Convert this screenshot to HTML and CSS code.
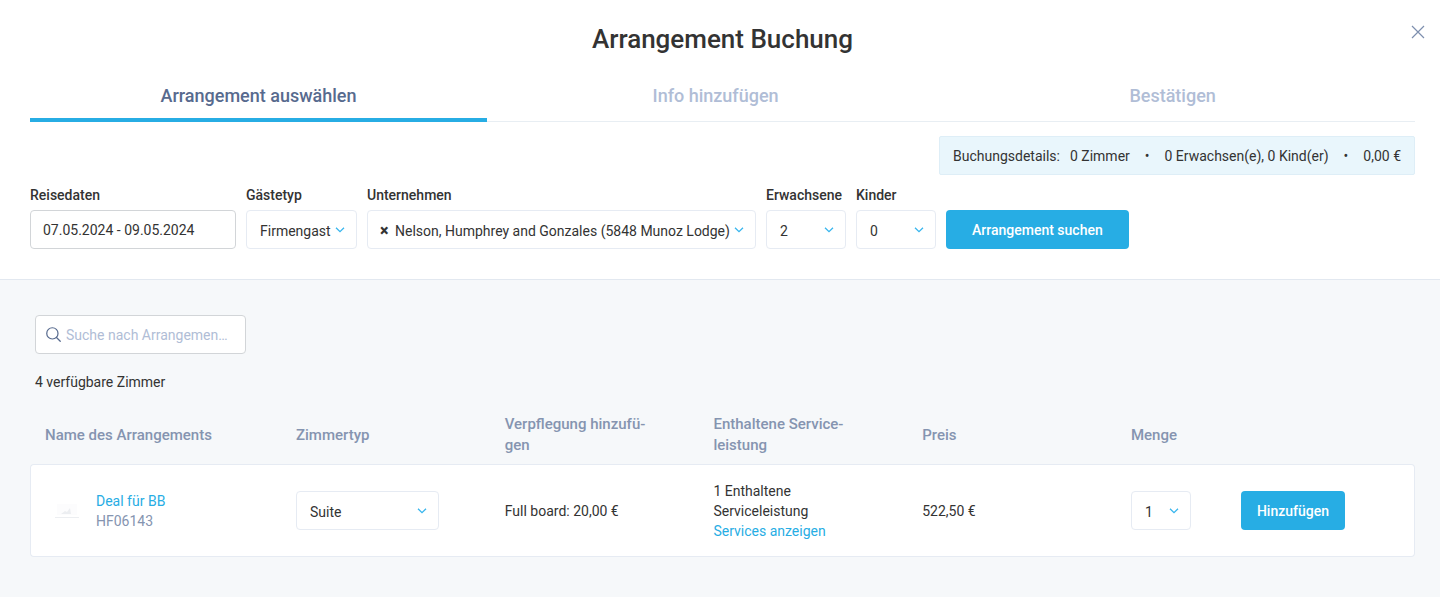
FILE: index.html
```html
<!DOCTYPE html>
<html lang="de">
<head>
<meta charset="utf-8">
<title>Arrangement Buchung</title>
<link rel="stylesheet" href="styles.css">
</head>
<body>
<header class="top">
  <h1 class="title">Arrangement Buchung</h1>
  <button class="close" type="button" aria-label="Schließen">
    <svg width="14" height="14" viewBox="0 0 14 14" fill="none" stroke="currentColor" stroke-width="1.2"><path d="M1 1l12 12M13 1L1 13"/></svg>
  </button>
  <nav class="tabs">
    <a class="tab tab-active" href="#auswahl">Arrangement auswählen</a>
    <a class="tab" href="#info">Info hinzufügen</a>
    <a class="tab" href="#bestaetigen">Bestätigen</a>
  </nav>
  <div class="details">
    <span>Buchungsdetails:</span>
    <ul class="facts">
      <li>0 Zimmer</li>
      <li>0 Erwachsen(e), 0 Kind(er)</li>
      <li>0,00 €</li>
    </ul>
  </div>
  <form class="filters">
    <div class="field field-dates">
      <label for="dates">Reisedaten</label>
      <input class="control" id="dates" type="text" value="07.05.2024 - 09.05.2024">
    </div>
    <div class="field field-guest">
      <label for="guest">Gästetyp</label>
      <select class="control select" id="guest"><option>Firmengast</option></select>
    </div>
    <div class="field field-company">
      <label for="company">Unternehmen</label>
      <div class="clearable">
        <select class="control select" id="company"><option>Nelson, Humphrey and Gonzales (5848 Munoz Lodge)</option></select>
        <button class="clear" type="button" aria-label="Unternehmen entfernen">×</button>
      </div>
    </div>
    <div class="field field-count">
      <label for="adults">Erwachsene</label>
      <select class="control select" id="adults"><option>2</option></select>
    </div>
    <div class="field field-count">
      <label for="children">Kinder</label>
      <select class="control select" id="children"><option>0</option></select>
    </div>
    <button class="button button-search" type="button">Arrangement suchen</button>
  </form>
</header>
<main class="results">
  <div class="search">
    <svg class="search-icon" width="15" height="15" viewBox="0 0 16 16" fill="none" stroke="currentColor" stroke-width="1.3" stroke-linecap="round"><circle cx="6.8" cy="6.8" r="6"/><path d="M11.2 11.2L15.2 15.2"/></svg>
    <input class="control search-input" type="text" placeholder="Suche nach Arrangemen…" aria-label="Suche nach Arrangements">
  </div>
  <p class="available">4 verfügbare Zimmer</p>
  <table class="rooms">
    <colgroup><col class="col-name"><col class="col-std"><col class="col-std"><col class="col-std"><col class="col-std"><col class="col-qty"><col></colgroup>
    <thead>
      <tr>
        <th>Name des Arrangements</th>
        <th>Zimmertyp</th>
        <th>Verpflegung hinzufü&shy;gen</th>
        <th>Enthaltene Service&shy;leistung</th>
        <th>Preis</th>
        <th>Menge</th>
        <td></td>
      </tr>
    </thead>
    <tbody>
      <tr>
        <td>
          <div class="deal">
            <svg class="thumb" width="24" height="16" viewBox="0 0 24 16"><path d="M2 1h20v11H2z" fill="#fcfcfd"/><path d="M6 11l4-3 2 1 3-4 1 6z" fill="#eceef1"/><path d="M0 14h24v1H0z" fill="#eceef1"/></svg>
            <div>
              <a class="link" href="#deal">Deal für BB</a>
              <div class="code">HF06143</div>
            </div>
          </div>
        </td>
        <td><select class="control select select-room" aria-label="Zimmertyp"><option>Suite</option></select></td>
        <td>Full board: 20,00 €</td>
        <td>1 Enthaltene Serviceleistung<br><a class="link" href="#services">Services anzeigen</a></td>
        <td>522,50 €</td>
        <td class="cell-tight"><select class="control select select-qty" aria-label="Menge"><option>1</option></select></td>
        <td class="cell-tight"><button class="button button-add" type="button">Hinzufügen</button></td>
      </tr>
    </tbody>
  </table>
</main>
</body>
</html>
```
FILE: styles.css
```css
* { box-sizing: border-box; }
body {
  margin: 0;
  background: #fff;
  color: #333;
  font: 14px/20px Roboto, "Liberation Sans", sans-serif;
}
button, input, select { font: inherit; color: inherit; }
a { text-decoration: none; }

.top {
  position: relative;
  padding: 21px 25px 30px 30px;
  border-bottom: 1px solid #e2e8f0;
}
.title {
  margin: 0;
  font-size: 26px;
  line-height: 36px;
  font-weight: 500;
  text-align: center;
}
.close {
  position: absolute;
  top: 24px;
  right: 14px;
  display: flex;
  padding: 1px;
  border: 0;
  background: none;
  color: #7d8fae;
  cursor: pointer;
}
.tabs {
  display: flex;
  margin-top: 19px;
  box-shadow: inset 0 -1px #e8eef3;
}
.tab {
  width: 33%;
  padding: 8px 0 10px;
  border-bottom: 4px solid transparent;
  color: #b0bdd6;
  font-size: 18px;
  line-height: 24px;
  font-weight: 500;
  text-align: center;
}
.tab-active { color: #576a8e; border-color: #27ade4; }

.details {
  display: flex;
  gap: 10px;
  width: fit-content;
  margin: 14px 0 0 auto;
  padding: 9px 13px 8px;
  border: 1px solid #deeef7;
  border-radius: 2px;
  background: #e9f6fc;
}
.facts { display: flex; margin: 0; padding: 0; list-style: none; }
.facts li + li::before { content: "•"; margin: 0 15px; line-height: 16px; }

.filters {
  display: flex;
  align-items: flex-end;
  gap: 10px;
  margin-top: 10px;
}
.field label {
  display: block;
  margin-bottom: 5px;
  font-weight: 500;
}
.field-dates { width: 206px; }
.field-guest { width: 111px; }
.field-company { width: 389px; }
.field-count { width: 80px; }
.field-count label { white-space: nowrap; }
.control {
  display: block;
  width: 100%;
  height: 39px;
  padding: 0 12px;
  border: 1px solid #d2d5d8;
  border-radius: 4px;
  background: #fff;
  outline: 0;
}
.select {
  appearance: none;
  padding: 3px 24px 0 13px;
  border-color: #e6ebf3;
  background: #fff url("data:image/svg+xml,%3Csvg xmlns='http://www.w3.org/2000/svg' width='10' height='6' fill='none' stroke='%2338b6ee' stroke-width='1.3'%3E%3Cpath d='M1 .7l4 4 4-4'/%3E%3C/svg%3E") no-repeat right 11px center;
}
.clearable { position: relative; }
.clearable .select { padding-left: 27px; }
.clear {
  position: absolute;
  top: 11px;
  left: 13px;
  padding: 0;
  border: 0;
  background: none;
  font-size: 16px;
  font-weight: 900;
  line-height: 20px;
}
.button {
  height: 39px;
  padding: 0 16px;
  border: 0;
  border-radius: 4px;
  background: #27ade4;
  color: #fff;
  font-weight: 500;
  cursor: pointer;
}
.button-search { padding: 0 26px; }

.results { padding: 35px 25px 40px 30px; background: #f6f8fa; }
.search { position: relative; width: 211px; margin-left: 5px; }
.search-icon { position: absolute; top: 12px; left: 11px; color: #576a8e; }
.search-input { padding-left: 30px; }
.search-input::placeholder { color: #b0bdd6; opacity: 1; }
.available { margin: 18px 0 0 5px; }

.rooms {
  width: 100%;
  margin-top: 18px;
  table-layout: fixed;
  border-spacing: 0;
}
.col-name { width: 256px; }
.col-std { width: 15.07%; }
.col-qty { width: 110px; }
.rooms th {
  padding: 4px 40px 8px 10px;
  color: #8594b0;
  font-size: 15px;
  line-height: 21px;
  font-weight: 500;
  text-align: left;
}
.rooms th:first-child { padding: 4px 10px 8px 15px; }
.rooms th:nth-child(6) { padding-right: 10px; }
.rooms tbody td {
  height: 93px;
  padding: 0 50px 0 10px;
  border: solid #e6ebf3;
  border-width: 1px 0;
  background: #fff;
}
.rooms tbody td:first-child { padding-left: 24px; border-left-width: 1px; border-radius: 4px 0 0 4px; }
.rooms tbody td:last-child { border-right-width: 1px; border-radius: 0 4px 4px 0; }
.rooms tbody .cell-tight { padding-right: 0; }
.deal { display: flex; align-items: center; gap: 17px; white-space: nowrap; }
.link { color: #27ade4; }
.code { color: #8594b0; }
.select-room { width: 143px; }
.select-qty { width: 60px; }
```
